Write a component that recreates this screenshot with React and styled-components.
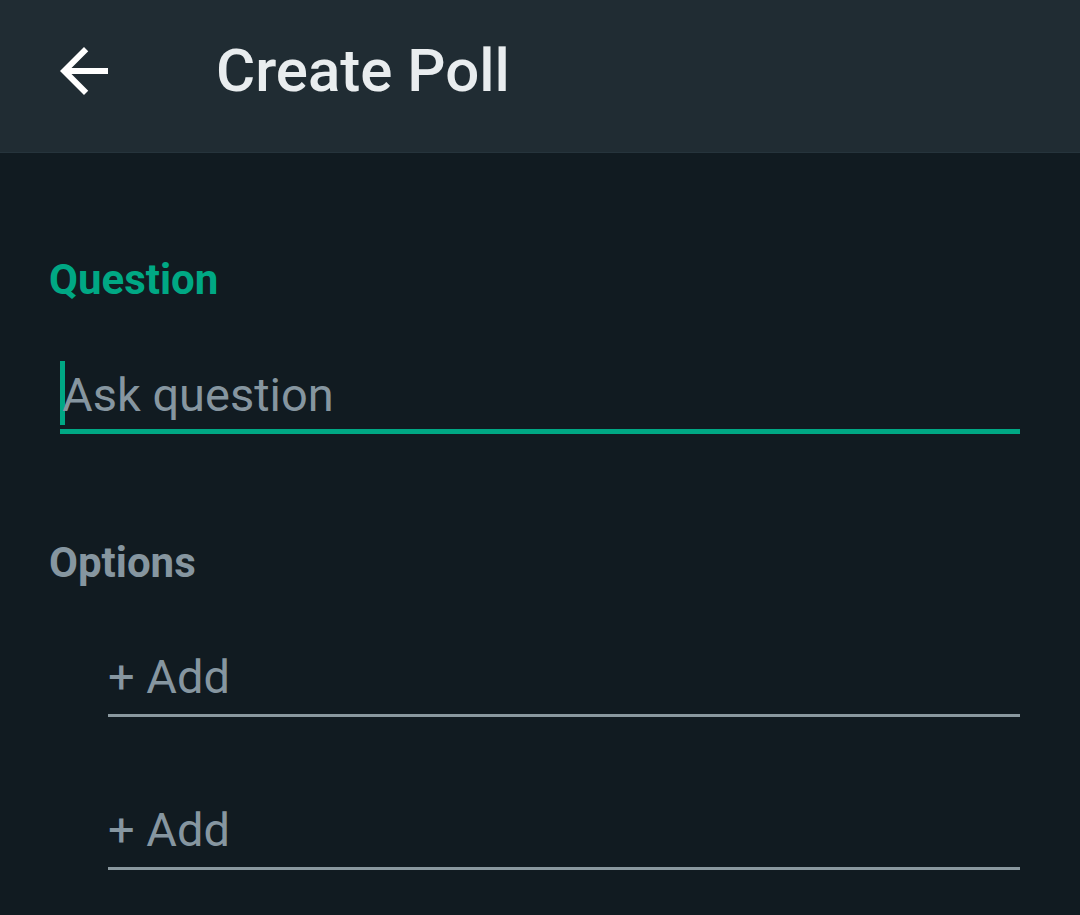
import React from 'react';
import styled, { createGlobalStyle } from 'styled-components';

const GlobalStyle = createGlobalStyle`
  html, body {
    margin: 0;
    padding: 0;
    background: #111b21;
  }
  body {
    font-family: Roboto, "Noto Sans", sans-serif;
  }
`;

const Page = styled.div`
  width: 1080px;
  height: 915px;
  background: #111b21;
  overflow: hidden;
`;

const Header = styled.header`
  height: 153px;
  box-sizing: border-box;
  display: flex;
  align-items: center;
  padding: 0 0 10px 48px;
  background: #202c33;
  border-bottom: 1px solid #26343c;
`;

const BackButton = styled.button`
  width: 72px;
  height: 72px;
  padding: 0;
  border: none;
  background: none;
  color: #ffffff;
  display: flex;
  align-items: center;
  justify-content: center;
  cursor: pointer;
`;

const Title = styled.h1`
  margin: 0 0 0 96px;
  font-size: 60px;
  font-weight: 500;
  color: #e9edef;
  line-height: 1;
`;

const Main = styled.main`
  padding: 106px 60px 0 49px;
  display: flex;
  flex-direction: column;
`;

const SectionLabel = styled.div`
  font-size: 42px;
  font-weight: 700;
  line-height: 1;
  color: ${(p) => (p.$active ? '#00a884' : '#8696a0')};
`;

const QuestionField = styled.div`
  margin: 62px 0 0 11px;
  height: 66px;
  display: flex;
  align-items: flex-end;
  border-bottom: 5px solid #00a884;
`;

const Caret = styled.span`
  width: 5px;
  height: 64px;
  background: #00a884;
  align-self: flex-start;
  margin-top: -2px;
`;

const Placeholder = styled.span`
  font-size: 47px;
  line-height: 1;
  color: #8696a0;
  margin: 0 0 11px -3px;
`;

const OptionsLabel = styled(SectionLabel)`
  margin-top: 108px;
`;

const OptionList = styled.div`
  display: flex;
  flex-direction: column;
  gap: 84px;
  margin: 64px 0 0 59px;
`;

const OptionField = styled.div`
  height: 66px;
  display: flex;
  align-items: flex-end;
  border-bottom: 3px solid #8a989f;
`;

const AddText = styled.span`
  font-size: 47px;
  line-height: 1;
  color: #8696a0;
  margin-bottom: 14px;
`;

const ArrowIcon = () => (
  <svg width="72" height="72" viewBox="0 0 24 24" fill="currentColor">
    <path d="M20 11H7.83l5.59-5.59L12 4l-8 8 8 8 1.41-1.41L7.83 13H20v-2z" />
  </svg>
);

const App = () => {
  const options = ['+ Add', '+ Add'];

  return (
    <Page>
      <GlobalStyle />
      <Header>
        <BackButton aria-label="Back">
          <ArrowIcon />
        </BackButton>
        <Title>Create Poll</Title>
      </Header>
      <Main>
        <SectionLabel $active>Question</SectionLabel>
        <QuestionField>
          <Caret />
          <Placeholder>Ask question</Placeholder>
        </QuestionField>
        <OptionsLabel>Options</OptionsLabel>
        <OptionList>
          {options.map((text, i) => (
            <OptionField key={i}>
              <AddText>{text}</AddText>
            </OptionField>
          ))}
        </OptionList>
      </Main>
    </Page>
  );
};

export default App;
